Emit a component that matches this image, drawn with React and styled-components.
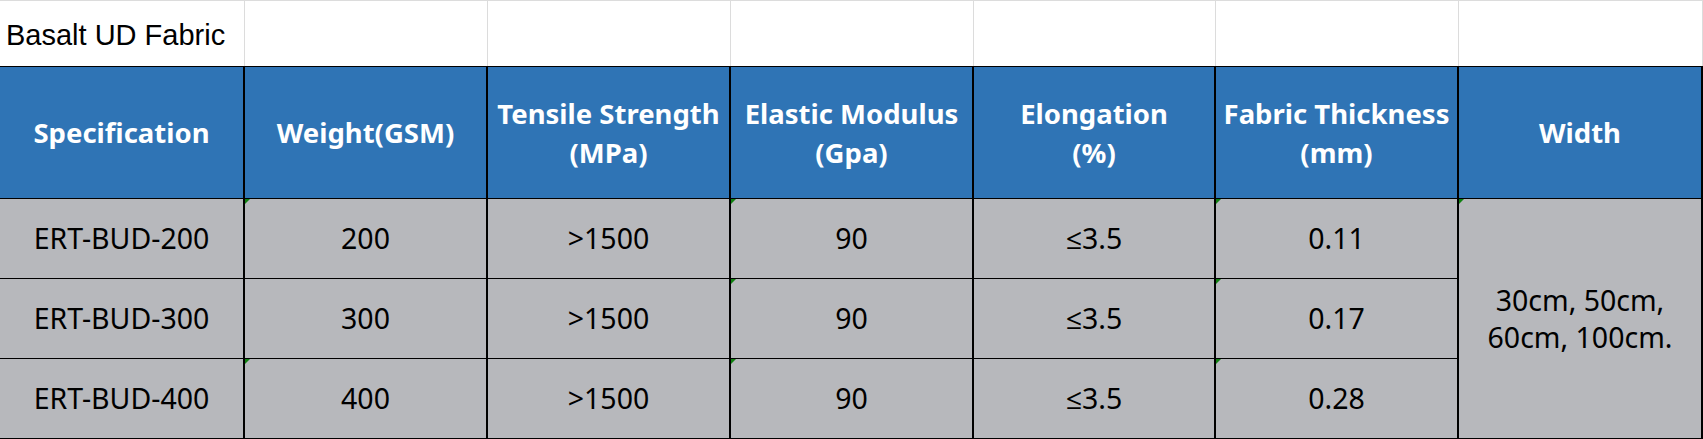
import styled, { createGlobalStyle } from "styled-components";

const GlobalStyle = createGlobalStyle`
    html, body {
        margin: 0;
        padding: 0;
        background: #fff;
    }
    * {
        box-sizing: border-box;
    }
`;

const Sheet = styled.div`
    display: grid;
    grid-template-columns: 245px 243px 243px 243px 242px 243px 244px;
    grid-template-rows: 66px 133px 80px 80px 80px;
    width: 1703px;
    font-family: "Noto Sans", "Open Sans", sans-serif;
`;

const TitleCell = styled.div`
    display: flex;
    align-items: center;
    padding: 4px 0 0 6px;
    background: #fff;
    border-top: 1px solid #dcdcdc;
    border-right: 1px solid #dcdcdc;
    font-family: "Liberation Sans", Arial, sans-serif;
    font-size: 29px;
    color: #000;
    white-space: nowrap;
`;

const HeadCell = styled.div`
    display: flex;
    align-items: center;
    justify-content: center;
    text-align: center;
    background: #2f74b5;
    color: #fff;
    font-weight: 700;
    font-size: 27.5px;
    line-height: 39px;
    border-top: 1px solid #000;
    border-bottom: 1px solid #000;
    border-right: 2px solid #000;
`;

const DataCell = styled.div`
    position: relative;
    display: flex;
    align-items: center;
    justify-content: center;
    text-align: center;
    background: #b7b8bc;
    color: #000;
    font-size: 28.5px;
    line-height: 37px;
    border-bottom: 1px solid #000;
    border-right: 2px solid #000;
    grid-row: ${(p) => (p.$span ? `span ${p.$span}` : "auto")};

    &::before {
        content: "";
        display: ${(p) => (p.$flag ? "block" : "none")};
        position: absolute;
        top: 0;
        left: 0;
        border-top: 5px solid #108010;
        border-right: 5px solid transparent;
    }
`;

const headers = [
    ["Specification"],
    ["Weight(GSM)"],
    ["Tensile Strength", "(MPa)"],
    ["Elastic Modulus", "(Gpa)"],
    ["Elongation", "(%)"],
    ["Fabric Thickness", "(mm)"],
    ["Width"],
];

const rows = [
    { spec: "ERT-BUD-200", weight: "200", thick: "0.11", flags: [false, true, false, true, false, true] },
    { spec: "ERT-BUD-300", weight: "300", thick: "0.17", flags: [false, false, false, true, false, true] },
    { spec: "ERT-BUD-400", weight: "400", thick: "0.28", flags: [false, true, false, true, false, true] },
];

export default function App() {
    return (
        <>
            <GlobalStyle />
            <Sheet>
                <TitleCell>Basalt UD Fabric</TitleCell>
                {[0, 1, 2, 3, 4, 5].map((i) => (
                    <TitleCell key={i} />
                ))}

                {headers.map((h, i) => (
                    <HeadCell key={i}>
                        <div>
                            {h.map((line, j) => (
                                <div key={j}>{line}</div>
                            ))}
                        </div>
                    </HeadCell>
                ))}

                {rows.map((r, i) => {
                    const values = [r.spec, r.weight, ">1500", "90", "≤3.5", r.thick];
                    return [
                        ...values.map((v, j) => (
                            <DataCell key={`${i}-${j}`} $flag={r.flags[j]}>
                                {v}
                            </DataCell>
                        )),
                        i === 0 && (
                            <DataCell key="width" $span={3} $flag>
                                <div>
                                    <div>30cm, 50cm,</div>
                                    <div>60cm, 100cm.</div>
                                </div>
                            </DataCell>
                        ),
                    ];
                })}
            </Sheet>
        </>
    );
}
